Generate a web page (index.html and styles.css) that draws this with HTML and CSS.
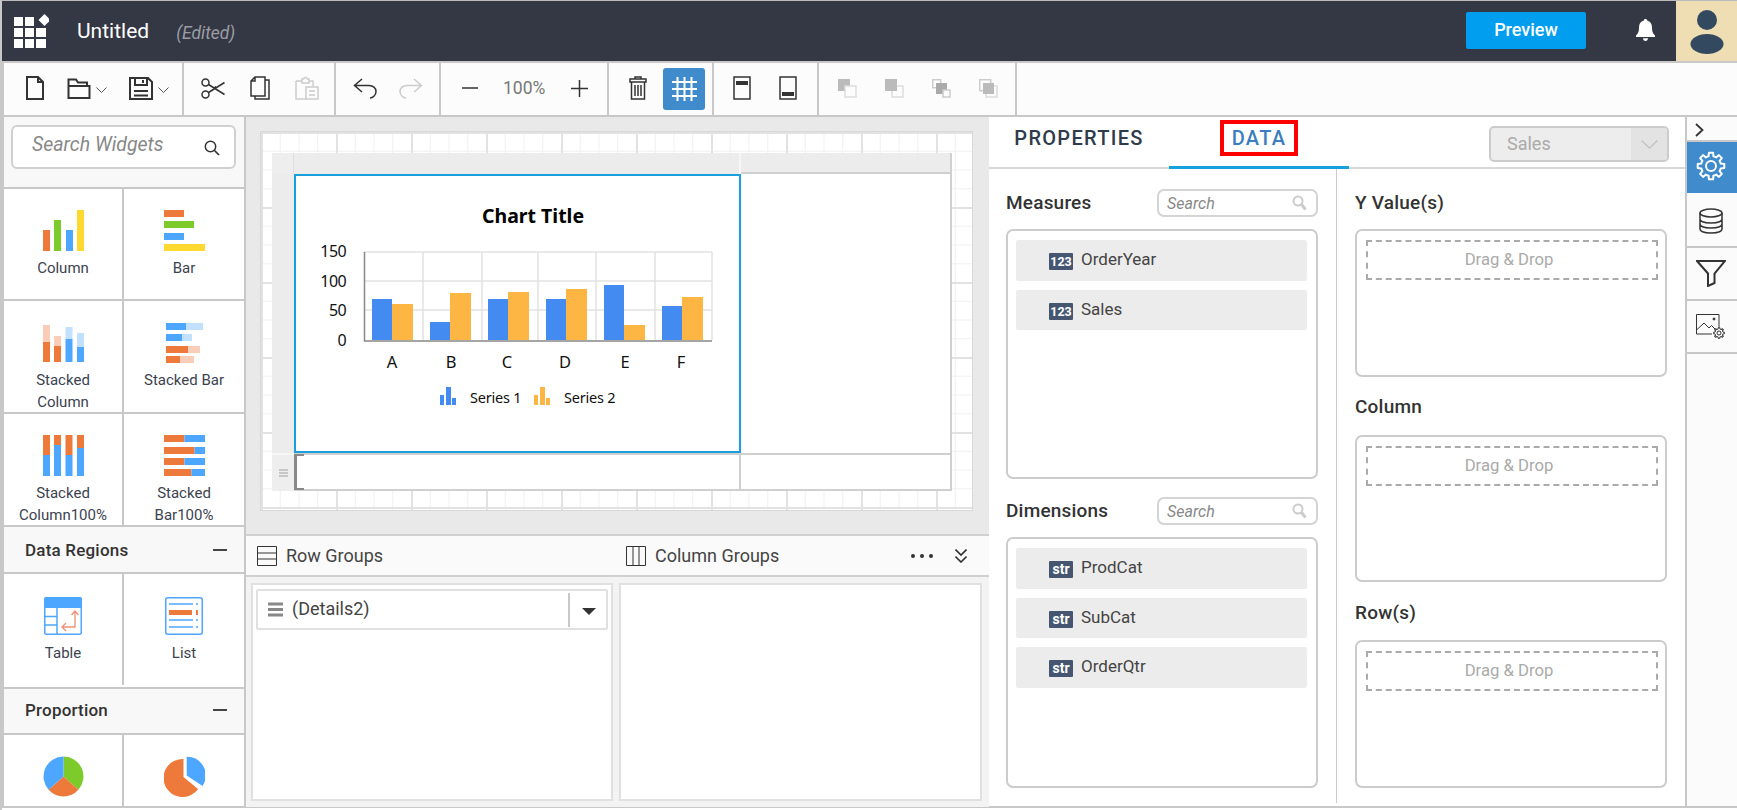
FILE: index.html
```html
<!doctype html>
<html lang="en">
<head>
    <meta charset="UTF-8">
    <title>Report Designer</title>
    <link rel="stylesheet" href="styles.css">
</head>
<body>
<div class="app">

    <!-- top bar -->
    <div class="topbar">
        <svg class="logo" width="35" height="34" viewBox="0 0 35 34">
            <g fill="#fff">
                <rect x="0" y="3" width="9" height="9"/><rect x="11" y="3" width="9" height="9"/>
                <rect x="0" y="14" width="9" height="9"/><rect x="11" y="14" width="9" height="9"/><rect x="22" y="14" width="10" height="9"/>
                <rect x="0" y="25" width="9" height="9"/><rect x="11" y="25" width="9" height="9"/><rect x="22" y="25" width="10" height="9"/>
                <polygon points="30.5,0 36.5,6 30.5,12 24.5,6"/>
            </g>
        </svg>
        <span class="doc-name">Untitled</span>
        <span class="doc-state">(Edited)</span>
        <button class="preview-btn">Preview</button>
        <svg class="bell" width="19" height="22" viewBox="0 0 19 22">
            <path fill="#fff" d="M9.5 0c1 0 1.6.7 1.6 1.6C14.5 2.4 16 5 16 8.5c0 4 .8 6 3 8V18H0v-1.5c2.2-2 3-4 3-8C3 5 4.5 2.4 7.9 1.6 7.9.7 8.5 0 9.5 0zM7 19.2h5c0 1.5-1.1 2.8-2.5 2.8S7 20.7 7 19.2z"/>
        </svg>
        <div class="avatar">
            <svg width="34" height="44" viewBox="0 0 34 44">
                <circle cx="17" cy="10" r="10" fill="#33495f"/>
                <ellipse cx="17" cy="34" rx="16.5" ry="10" fill="#33495f"/>
            </svg>
        </div>
    </div>

    <!-- toolbar -->
    <div class="toolbar">
        <div class="tb-group group-file">
            <svg width="20" height="24" viewBox="0 0 20 24" class="ic"><path d="M2 1H13L18 6V23H2ZM13 1V6H18"/></svg>
            <span class="tb-pair">
                <svg width="24" height="22" viewBox="0 0 24 22" class="ic"><path d="M1.5 21V2.5H9L11 5.5H20V9M1.5 21H22.5V9H1.5Z"/></svg>
                <svg width="11" height="7" viewBox="0 0 11 7" class="ic-thin"><path d="M.5 .5L5.5 5.5L10.5 .5"/></svg>
            </span>
            <span class="tb-pair">
                <svg width="24" height="23" viewBox="0 0 24 23" class="ic"><path d="M1 1H19L23 5V22H1ZM6 1V8H18V1M14 3V6M5 14H19M5 18.5H19"/></svg>
                <svg width="11" height="7" viewBox="0 0 11 7" class="ic-thin"><path d="M.5 .5L5.5 5.5L10.5 .5"/></svg>
            </span>
        </div>
        <div class="tb-group group-edit">
            <svg width="24" height="21" viewBox="0 0 24 21" class="ic ic-mid"><circle cx="4.5" cy="4.5" r="3.5"/><circle cx="4.5" cy="16.5" r="3.5"/><path d="M7.5 6.5L23.5 16.5M7.5 14.5L23.5 4.5M13 10L15 8.5"/></svg>
            <svg width="20" height="24" viewBox="0 0 20 24" class="ic ic-mid"><path d="M1 5L5 1H15V20H1ZM5 1V5H1M15 4H19V23H5V20"/></svg>
            <svg width="24" height="24" viewBox="0 0 24 24" class="ic ic-mid ic-off"><path d="M1 5H7V3H8.5C9 1 12 1 12.5 3H14V5H18V10M1 5V23H11M7 3V7H14V3M11 11H23V23H11ZM14 15H20M14 19H20"/></svg>
        </div>
        <div class="tb-group group-history">
            <svg width="24" height="21" viewBox="0 0 24 21" class="ic ic-mid"><path d="M9 1L1.5 7.5L9 14M1.5 7.5H16C20 7.5 23 10 23 13.5S20 20 17 20"/></svg>
            <svg width="24" height="21" viewBox="0 0 24 21" class="ic ic-mid ic-off"><path d="M15 1L22.5 7.5L15 14M22.5 7.5H8C4 7.5 1 10 1 13.5S4 20 7 20"/></svg>
        </div>
        <div class="tb-group group-zoom">
            <svg width="16" height="16" viewBox="0 0 16 16" class="ic ic-mid"><path d="M0 8H16"/></svg>
            <span class="zoom-val">100%</span>
            <svg width="17" height="17" viewBox="0 0 17 17" class="ic ic-mid"><path d="M0 8.5H17M8.5 0V17"/></svg>
        </div>
        <div class="tb-group group-design">
            <svg width="18" height="24" viewBox="0 0 18 24" class="ic ic-mid"><path d="M6 3V1H12V3M1 3H17V6H1ZM2.5 6V23H15.5V6M6 9V20M9 9V20M12 9V20"/></svg>
            <span class="grid-btn">
                <svg width="25" height="24" viewBox="0 0 25 24"><path fill="none" stroke="#fff" stroke-width="2" d="M5.5 0V24M12.5 0V24M19.5 0V24M0 5H25M0 12H25M0 19H25"/></svg>
            </span>
        </div>
        <div class="tb-group group-band">
            <svg width="18" height="24" viewBox="0 0 18 24" class="ic ic-mid"><rect x="1" y="1" width="16" height="22"/><rect x="3" y="5" width="12" height="4" class="solid"/></svg>
            <svg width="18" height="24" viewBox="0 0 18 24" class="ic ic-mid"><rect x="1" y="1" width="16" height="22"/><rect x="3" y="16" width="12" height="4" class="solid"/></svg>
        </div>
        <div class="tb-group group-order">
            <svg width="19" height="19" viewBox="0 0 19 19"><rect width="12" height="12" fill="#bbb"/><rect x="7" y="7" width="11" height="11" fill="#fcfcfc" stroke="#ddd" stroke-width="1.5"/></svg>
            <svg width="19" height="19" viewBox="0 0 19 19"><rect x="7" y="7" width="11" height="11" fill="#fcfcfc" stroke="#ddd" stroke-width="1.5"/><rect width="12" height="12" fill="#bbb"/></svg>
            <svg width="19" height="19" viewBox="0 0 19 19"><rect x=".7" y=".7" width="8" height="8" fill="#fcfcfc" stroke="#ccc" stroke-width="1.5"/><rect x="4" y="4" width="11" height="11" fill="#aaa"/><rect x="11" y="11" width="7" height="7" fill="#fcfcfc" stroke="#ccc" stroke-width="1.5"/></svg>
            <svg width="19" height="19" viewBox="0 0 19 19"><rect x=".7" y=".7" width="11" height="11" fill="#fcfcfc" stroke="#ccc" stroke-width="1.5"/><rect x="7" y="7" width="11" height="11" fill="#fcfcfc" stroke="#ddd" stroke-width="1.5"/><rect x="4" y="4" width="11" height="11" fill="#bbb"/></svg>
        </div>
    </div>

    <div class="main">

        <!-- widget list -->
        <div class="widgets">
            <div class="widget-search">
                <div class="search-big">
                    <span>Search Widgets</span>
                    <svg width="16" height="16" viewBox="0 0 16 16"><circle cx="6.5" cy="6.5" r="5.2" fill="none" stroke="#333" stroke-width="1.5"/><path d="M10.5 10.5L15 15" stroke="#333" stroke-width="1.7"/></svg>
                </div>
            </div>

            <div class="widget-row row-a">
                <div class="widget-cell">
                    <svg width="41" height="41" viewBox="0 0 41 41">
                        <rect x="0" y="20" width="7" height="21" fill="#ed7a3a"/><rect x="11" y="10" width="7" height="31" fill="#7dcb2b"/>
                        <rect x="23" y="20" width="7" height="21" fill="#4da6ff"/><rect x="34" y="0" width="7" height="41" fill="#ffd92f"/>
                    </svg>
                    <span>Column</span>
                </div>
                <div class="widget-cell">
                    <svg width="41" height="41" viewBox="0 0 41 41">
                        <rect x="0" y="0" width="20" height="7" fill="#ed7a3a"/><rect x="0" y="11" width="30" height="7" fill="#7dcb2b"/>
                        <rect x="0" y="23" width="20" height="7" fill="#4da6ff"/><rect x="0" y="34" width="41" height="7" fill="#ffd92f"/>
                    </svg>
                    <span>Bar</span>
                </div>
            </div>

            <div class="widget-row row-b">
                <div class="widget-cell">
                    <svg width="41" height="41" viewBox="0 0 41 41">
                        <rect x="0" y="3" width="7" height="17" fill="#f9cdb8"/><rect x="0" y="20" width="7" height="20" fill="#ed7a3a"/>
                        <rect x="11" y="14" width="7" height="10" fill="#f9cdb8"/><rect x="11" y="24" width="7" height="16" fill="#ed7a3a"/>
                        <rect x="22.5" y="5" width="7" height="12" fill="#c2e0ff"/><rect x="22.5" y="17" width="7" height="23" fill="#4da6ff"/>
                        <rect x="34" y="11" width="7" height="14" fill="#c2e0ff"/><rect x="34" y="25" width="7" height="15" fill="#4da6ff"/>
                    </svg>
                    <span>Stacked<br>Column</span>
                </div>
                <div class="widget-cell">
                    <svg width="41" height="41" viewBox="0 0 41 41">
                        <rect x="2" y="1" width="20" height="7" fill="#4da6ff"/><rect x="22" y="1" width="17" height="7" fill="#c2e0ff"/>
                        <rect x="2" y="12" width="16" height="7" fill="#4da6ff"/><rect x="18" y="12" width="10" height="7" fill="#c2e0ff"/>
                        <rect x="2" y="24" width="22" height="7" fill="#ed7a3a"/><rect x="24" y="24" width="12" height="7" fill="#f9cdb8"/>
                        <rect x="2" y="34" width="14" height="7" fill="#ed7a3a"/><rect x="16" y="34" width="14" height="7" fill="#f9cdb8"/>
                    </svg>
                    <span>Stacked Bar</span>
                </div>
            </div>

            <div class="widget-row row-b">
                <div class="widget-cell">
                    <svg width="41" height="41" viewBox="0 0 41 41">
                        <rect x="0" y="0" width="7" height="20" fill="#ed7a3a"/><rect x="0" y="20" width="7" height="21" fill="#4da6ff"/>
                        <rect x="11" y="0" width="7" height="10" fill="#ed7a3a"/><rect x="11" y="10" width="7" height="31" fill="#4da6ff"/>
                        <rect x="22.5" y="0" width="7" height="20" fill="#ed7a3a"/><rect x="22.5" y="20" width="7" height="21" fill="#4da6ff"/>
                        <rect x="34" y="0" width="7" height="13" fill="#ed7a3a"/><rect x="34" y="13" width="7" height="28" fill="#4da6ff"/>
                    </svg>
                    <span>Stacked<br>Column100%</span>
                </div>
                <div class="widget-cell">
                    <svg width="41" height="41" viewBox="0 0 41 41">
                        <rect x="0" y="0" width="20.5" height="7" fill="#ed7a3a"/><rect x="20.5" y="0" width="20.5" height="7" fill="#4da6ff"/>
                        <rect x="0" y="12" width="30.5" height="7" fill="#ed7a3a"/><rect x="30.5" y="12" width="10.5" height="7" fill="#4da6ff"/>
                        <rect x="0" y="23" width="20.5" height="7" fill="#ed7a3a"/><rect x="20.5" y="23" width="20.5" height="7" fill="#4da6ff"/>
                        <rect x="0" y="34" width="27.5" height="7" fill="#ed7a3a"/><rect x="27.5" y="34" width="13.5" height="7" fill="#4da6ff"/>
                    </svg>
                    <span>Stacked<br>Bar100%</span>
                </div>
            </div>

            <div class="widget-head head-a">
                <span>Data Regions</span><i></i>
            </div>
            <div class="widget-row row-c">
                <div class="widget-cell cell-small">
                    <svg width="38" height="38" viewBox="0 0 38 38">
                        <rect x=".75" y=".75" width="36.5" height="36.5" rx="2" fill="#fff" stroke="#4da6ff" stroke-width="1.5"/>
                        <rect x="0" y="0" width="38" height="11" rx="2" fill="#4da6ff"/>
                        <path d="M13 11V38M0 19.5H13M0 28H13" fill="none" stroke="#4da6ff" stroke-width="1.5"/>
                        <path d="M31 14V30H18M27.5 18L31 14L34.5 18M22 26L18 30L22 34" fill="none" stroke="#f0907a" stroke-width="1.3"/>
                    </svg>
                    <span>Table</span>
                </div>
                <div class="widget-cell cell-small">
                    <svg width="38" height="38" viewBox="0 0 38 38">
                        <rect x=".75" y=".75" width="36.5" height="36.5" rx="2" fill="#fff" stroke="#4da6ff" stroke-width="1.5"/>
                        <path d="M4 7H28M31 7H33M4 23H28M31 23H33M4 30H28M31 30H33" fill="none" stroke="#4da6ff" stroke-width="1.5"/>
                        <rect x="4" y="13" width="23" height="5" fill="#ed7a3a"/><rect x="31" y="13" width="2" height="5" fill="#ed7a3a"/>
                    </svg>
                    <span>List</span>
                </div>
            </div>

            <div class="widget-head head-b">
                <span>Proportion</span><i></i>
            </div>
            <div class="widget-row row-d">
                <div class="widget-cell">
                    <svg width="41" height="41" viewBox="0 0 41 41">
                        <path d="M20.5 20.5V.5A20 20 0 0 1 35.4 33.8Z" fill="#7dcb2b"/>
                        <path d="M20.5 20.5L35.4 33.8A20 20 0 0 1 5.6 33.8Z" fill="#ed7a3a"/>
                        <path d="M20.5 20.5L5.6 33.8A20 20 0 0 1 20.5 .5Z" fill="#4da6ff"/>
                    </svg>
                </div>
                <div class="widget-cell">
                    <svg width="41" height="41" viewBox="0 0 41 41">
                        <path d="M19.5 21V3A19 19 0 1 0 34 33Z" fill="#ed7a3a"/>
                        <path d="M22.7 19.5V.7A18.8 18.8 0 0 1 38.5 30Z" fill="#4da6ff"/>
                    </svg>
                </div>
            </div>
        </div>

        <!-- canvas and groups -->
        <div class="center">
            <div class="stage">
                <div class="canvas">
                    <div class="surface">
                        <div class="strip-corner"></div>
                        <div class="strip"></div>
                        <div class="strip strip-end"></div>

                        <div class="side"></div>
                        <div class="chart-cell">
                            <svg width="443" height="275" viewBox="296 176 443 275" class="chart">
                                <text x="533" y="223" class="chart-title">Chart Title</text>
                                <path d="M364 252H712M364 281H712M364 310H712M423 252V340M482 252V340M538 252V340M596 252V340M655 252V340M712 252V340" fill="none" stroke="#e2e2e2" stroke-width="1.5"/>
                                <g fill="#438bf0">
                                    <rect x="372" y="299" width="20" height="41"/><rect x="430" y="322" width="20" height="18"/>
                                    <rect x="488" y="299" width="20" height="41"/><rect x="546" y="299" width="20" height="41"/>
                                    <rect x="604" y="285" width="20" height="55"/><rect x="662" y="306" width="20" height="34"/>
                                </g>
                                <g fill="#fdb544">
                                    <rect x="392" y="304" width="21" height="36"/><rect x="450" y="293" width="21" height="47"/>
                                    <rect x="508" y="292" width="21" height="48"/><rect x="566" y="289" width="21" height="51"/>
                                    <rect x="624" y="325" width="21" height="15"/><rect x="682" y="297" width="21" height="43"/>
                                </g>
                                <path d="M364.5 252V341H712" fill="none" stroke="#888" stroke-width="1.5"/>
                                <g class="axis-y">
                                    <text x="346" y="257">150</text><text x="346" y="287">100</text>
                                    <text x="346" y="316">50</text><text x="346" y="346">0</text>
                                </g>
                                <g class="axis-x">
                                    <text x="392" y="368">A</text><text x="451" y="368">B</text><text x="507" y="368">C</text>
                                    <text x="565" y="368">D</text><text x="625" y="368">E</text><text x="681" y="368">F</text>
                                </g>
                                <g fill="#438bf0"><rect x="440" y="395" width="4" height="10"/><rect x="446" y="387" width="5" height="18"/><rect x="452" y="398" width="4" height="7"/></g>
                                <g fill="#fdb544"><rect x="534" y="395" width="4" height="10"/><rect x="540" y="387" width="5" height="18"/><rect x="546" y="398" width="4" height="7"/></g>
                                <text x="470" y="403" class="legend">Series 1</text>
                                <text x="564" y="403" class="legend">Series 2</text>
                            </svg>
                        </div>
                        <div class="blank-cell"></div>

                        <div class="side side-low">
                            <svg width="9" height="8" viewBox="0 0 9 8"><path d="M0 1H9M0 4H9M0 7H9" stroke="#bbb" stroke-width="1.5"/></svg>
                        </div>
                        <div class="band-cell"><b class="corner"></b></div>
                        <div class="band-cell band-end"></div>
                    </div>
                </div>
            </div>

            <div class="groups-head">
                <div class="group-tab">
                    <svg width="20" height="20" viewBox="0 0 20 20" class="ic-line"><path d="M.5 .5H19.5V19.5H.5ZM.5 7H19.5M.5 13H19.5"/></svg>
                    <span>Row Groups</span>
                </div>
                <div class="group-tab">
                    <svg width="20" height="20" viewBox="0 0 20 20" class="ic-line"><path d="M.5 .5H19.5V19.5H.5ZM7 .5V19.5M13 .5V19.5"/></svg>
                    <span>Column Groups</span>
                </div>
                <svg class="more" width="22" height="4" viewBox="0 0 22 4"><circle cx="2" cy="2" r="2"/><circle cx="11" cy="2" r="2"/><circle cx="20" cy="2" r="2"/></svg>
                <svg class="fold" width="12" height="14" viewBox="0 0 12 14"><path d="M.5 .5L6 6L11.5 .5M.5 7.5L6 13L11.5 7.5" fill="none" stroke="#333" stroke-width="1.6"/></svg>
            </div>

            <div class="groups-body">
                <div class="group-box box-row">
                    <div class="detail-row">
                        <svg width="15" height="15" viewBox="0 0 15 15"><path d="M0 2H15M0 7.5H15M0 13H15" stroke="#888" stroke-width="3"/></svg>
                        <span>(Details2)</span>
                        <em></em>
                        <svg width="14" height="7" viewBox="0 0 14 7"><path d="M0 0H14L7 7Z" fill="#333"/></svg>
                    </div>
                </div>
                <div class="group-box box-col"></div>
            </div>
        </div>

        <!-- properties / data -->
        <div class="panel">
            <div class="tabs">
                <div class="tab">PROPERTIES</div>
                <div class="tab tab-on"><span>DATA</span></div>
                <div class="source">
                    <span>Sales</span>
                    <i><svg width="17" height="9" viewBox="0 0 17 9"><path d="M.5 .5L8.5 8L16.5 .5" fill="none" stroke="#c4c4c4" stroke-width="1.5"/></svg></i>
                </div>
            </div>
            <div class="panel-body">
                <div class="fields">
                    <div class="field-head">
                        <h4>Measures</h4>
                        <div class="search-small">
                            <span>Search</span>
                            <svg width="15" height="16" viewBox="0 0 15 16"><circle cx="6" cy="6" r="4.5" fill="none" stroke="#ccc" stroke-width="2"/><path d="M9.5 9.5L13.5 14.5" stroke="#ccc" stroke-width="3"/></svg>
                        </div>
                    </div>
                    <div class="field-box box-measures">
                        <div class="field"><b class="badge-num">123</b>OrderYear</div>
                        <div class="field"><b class="badge-num">123</b>Sales</div>
                    </div>
                    <div class="field-head head-second">
                        <h4>Dimensions</h4>
                        <div class="search-small">
                            <span>Search</span>
                            <svg width="15" height="16" viewBox="0 0 15 16"><circle cx="6" cy="6" r="4.5" fill="none" stroke="#ccc" stroke-width="2"/><path d="M9.5 9.5L13.5 14.5" stroke="#ccc" stroke-width="3"/></svg>
                        </div>
                    </div>
                    <div class="field-box box-dims">
                        <div class="field"><b>str</b>ProdCat</div>
                        <div class="field"><b>str</b>SubCat</div>
                        <div class="field"><b>str</b>OrderQtr</div>
                    </div>
                </div>
                <div class="slots">
                    <h4 class="slot-first">Y Value(s)</h4>
                    <div class="slot"><div class="drop">Drag &amp; Drop</div></div>
                    <h4 class="slot-label">Column</h4>
                    <div class="slot slot-mid"><div class="drop">Drag &amp; Drop</div></div>
                    <h4 class="slot-label slot-low">Row(s)</h4>
                    <div class="slot"><div class="drop">Drag &amp; Drop</div></div>
                </div>
            </div>
        </div>

        <!-- side rail -->
        <div class="rail">
            <div class="rail-toggle">
                <svg width="9" height="14" viewBox="0 0 9 14"><path d="M1 1L7.5 7L1 13" fill="none" stroke="#333" stroke-width="1.8"/></svg>
            </div>
            <div class="rail-item rail-on">
                <svg width="30" height="30" viewBox="-15 -15 30 30" class="gear">
                    <g id="gear-teeth">
                        <path id="tooth" d="M-3.83-9.24L-2.42-9.7L-2.11-13.3H2.11L2.42-9.7L3.83-9.24"/>
                        <use href="#tooth" transform="rotate(45)"/><use href="#tooth" transform="rotate(90)"/><use href="#tooth" transform="rotate(135)"/>
                        <use href="#tooth" transform="rotate(180)"/><use href="#tooth" transform="rotate(225)"/><use href="#tooth" transform="rotate(270)"/><use href="#tooth" transform="rotate(315)"/>
                    </g>
                    <circle r="5"/>
                </svg>
            </div>
            <div class="rail-item">
                <svg width="24" height="26" viewBox="0 0 24 26" class="ic ic-mid"><ellipse cx="12" cy="5" rx="11" ry="4"/><path d="M1 5V21C1 23.5 6 25 12 25S23 23.5 23 21V5M1 11C1 13.5 6 15 12 15S23 13.5 23 11M1 16C1 18.5 6 20 12 20S23 18.5 23 16"/></svg>
            </div>
            <div class="rail-item">
                <svg width="30" height="27" viewBox="0 0 30 27" class="ic"><path d="M1 1H29L18.5 13.5V23L12 26V13.5Z"/></svg>
            </div>
            <div class="rail-item">
                <svg width="29" height="25" viewBox="0 0 29 25" class="ic-line">
                    <path d="M.5 .5H23V13M16 20H.5V.5M.5 16L8 9L13 14M13 14L15.5 11.5L19 15"/>
                    <circle cx="18" cy="5" r="1" fill="#333"/>
                    <g transform="translate(23 19) scale(.4)" class="gear-small">
                        <use href="#gear-teeth"/>
                        <circle r="5"/>
                    </g>
                </svg>
            </div>
        </div>
    </div>
</div>
</body>
</html>
```

FILE: styles.css
```css
*{
    margin: 0;
    padding: 0;
    box-sizing: border-box;
}
html,body{
    width: 100%;
    height: 100%;
    overflow: hidden;
    background: #fff;
}
body{
    font-family: Roboto, "Liberation Sans", sans-serif;
    color: #333;
}
.app{
    width: 1737px;
    height: 810px;
    border-top: 1px solid #bbb;
    border-left: 2px solid #c8c8c8;
    overflow: hidden;
}

/* top bar */
.topbar{
    height: 60px;
    background: #343844;
    display: flex;
    align-items: center;
    color: #fff;
}
.logo{
    margin-left: 12px;
}
.doc-name{
    margin-left: 28px;
    font-size: 21px;
}
.doc-state{
    margin-left: 27px;
    margin-top: 3px;
    font-size: 17.5px;
    font-style: italic;
    color: #9a9da5;
}
.preview-btn{
    margin-left: auto;
    margin-bottom: 1px;
    width: 120px;
    height: 37px;
    border: none;
    border-radius: 2px;
    background: #019eef;
    color: #fff;
    font: 500 18px Roboto, sans-serif;
    padding-bottom: 3px;
}
.bell{
    margin-left: 50px;
    margin-top: -2px;
}
.avatar{
    margin-left: 21px;
    width: 61px;
    height: 60px;
    background: #efddb3;
    display: flex;
    align-items: center;
    justify-content: center;
    padding-top: 2px;
}

/* toolbar */
.toolbar{
    height: 56px;
    border-top: 2px solid #c8c8c8;
    border-bottom: 2px solid #c8c8c8;
    border-left: 2px solid #c8c8c8;
    background: #fcfcfc;
    display: flex;
}
.tb-group{
    display: flex;
    align-items: center;
    padding-bottom: 2px;
    border-right: 2px solid #c8c8c8;
}
.tb-pair{
    display: flex;
    align-items: center;
    gap: 5px;
}
.tb-pair .ic-thin{
    margin-top: 4px;
}
.group-file{width: 180px;padding-left: 21px;gap: 22px;}
.group-edit{width: 152px;padding-left: 17px;gap: 25px;}
.group-history{width: 105px;padding-left: 17px;gap: 22px;}
.group-zoom{width: 168px;padding-left: 21px;gap: 25px;}
.group-design{width: 105px;padding-left: 20px;gap: 16px;}
.group-band{width: 105px;padding-left: 19px;gap: 28px;}
.group-order{width: 198px;padding-left: 19px;gap: 28px;}
.ic{
    fill: none;
    stroke: #333;
    stroke-width: 2;
}
.ic-mid{
    stroke-width: 1.5;
}
.ic-off{
    stroke: #ccc;
}
.ic .solid{
    fill: #333;
    stroke: none;
}
.ic-thin{
    fill: none;
    stroke: #555;
    stroke-width: 1;
}
.ic-line{
    fill: none;
    stroke: #333;
    stroke-width: 1;
}
.zoom-val{
    width: 43px;
    font-size: 17.5px;
    color: #777;
    white-space: nowrap;
}
.grid-btn{
    width: 42px;
    height: 42px;
    margin-top: 2px;
    border-radius: 3px;
    background: #3f8bcb;
    display: flex;
    align-items: center;
    justify-content: center;
}

/* main row */
.main{
    display: flex;
    height: 691px;
    border-left: 2px solid #c8c8c8;
    border-bottom: 2px solid #c8c8c8;
}

/* widget list */
.widgets{
    width: 242px;
    border-right: 2px solid #c8c8c8;
    background: #fff;
    overflow: hidden;
}
.widget-search{
    height: 72px;
    padding: 8px 8px 0 7px;
    background: #f8f8f8;
    border-bottom: 2px solid #c8c8c8;
}
.search-big{
    height: 44px;
    border: 2px solid #d0d0d0;
    border-radius: 6px;
    background: #fff;
    display: flex;
    align-items: center;
    justify-content: space-between;
    padding: 0 14px 0 19px;
    font-size: 19.5px;
    font-style: italic;
    color: #888;
}
.search-big span{
    margin-top: -5px;
}
.search-big svg{
    margin-top: 2px;
}
.widget-row{
    display: flex;
    border-bottom: 2px solid #c8c8c8;
}
.row-a{height: 112px;}
.row-b{height: 113px;}
.row-c{height: 115px;padding-bottom: 2px;}
.row-d{height: 74px;border-bottom: none;}
.widget-cell{
    width: 120px;
    padding-top: 21px;
    display: flex;
    flex-direction: column;
    align-items: center;
    font-size: 15px;
    line-height: 22px;
    text-align: center;
    color: #3c4350;
}
.widget-cell:first-child{
    border-right: 2px solid #c8c8c8;
}
.widget-cell svg{
    margin-bottom: 6px;
    flex: none;
}
.cell-small{
    padding-top: 23px;
}
.cell-small svg{
    margin-bottom: 7px;
}
.widget-head{
    display: flex;
    align-items: center;
    justify-content: space-between;
    padding: 0 17px 0 21px;
    background: #f8f8f8;
    border-bottom: 2px solid #c8c8c8;
    font-size: 17px;
    font-weight: 500;
    letter-spacing: .2px;
}
.head-a{height: 47px;}
.head-b{height: 46px;padding-bottom: 2px;}
.widget-head i{
    width: 14px;
    height: 2px;
    background: #444;
}

/* center */
.center{
    width: 743px;
    background: #e9e9e9;
}
.stage{
    height: 419px;
    padding: 14px 0 0 14px;
    border-bottom: 2px solid #d0d0d0;
}
.canvas{
    width: 713px;
    height: 380px;
    padding: 21px 0 0 11px;
    border: 1px solid #d8d8d8;
    background-color: #fff;
    background-image:
        linear-gradient(90deg,#e2e2e2 2px,transparent 2px),
        linear-gradient(#e2e2e2 2px,transparent 2px),
        linear-gradient(90deg,#f0f0f0 1px,transparent 1px),
        linear-gradient(#f0f0f0 1px,transparent 1px);
    background-size: 75px 75px,75px 75px,18.75px 18.75px,18.75px 18.75px;
}
.surface{
    width: 680px;
    height: 338px;
    display: grid;
    grid-template-columns: 22px 447px 211px;
    grid-template-rows: 21px 279px 38px;
}
.strip-corner{
    background: #eee;
    border-right: 1px solid #ddd;
}
.strip{
    background: #ececec;
    border-right: 2px solid #f6f6f6;
}
.strip-end{
    border-right: 2px solid #d0d0d0;
    border-bottom: 2px solid #d0d0d0;
}
.side{
    background: #ececec;
}
.side-low{
    background: #eee;
    border-top: 2px solid #f6f6f6;
    display: flex;
    align-items: center;
    justify-content: center;
}
.chart-cell{
    border: 2px solid #1a9fdd;
    background: #fff;
}
.chart{
    display: block;
}
.chart text{
    font-family: "Noto Sans", "Open Sans", sans-serif;
    fill: #111;
}
.chart .chart-title{
    font-size: 19.5px;
    font-weight: 700;
    text-anchor: middle;
    fill: #000;
}
.axis-y text{
    font-size: 16px;
    letter-spacing: -.6px;
    text-anchor: end;
}
.axis-x text{
    font-size: 16.5px;
    text-anchor: middle;
}
.chart .legend{
    font-size: 14.5px;
    letter-spacing: -.2px;
}
.blank-cell{
    background: #fff;
    border-right: 2px solid #d0d0d0;
}
.band-cell{
    position: relative;
    background: #fff;
    border-top: 2px solid #d0d0d0;
    border-bottom: 2px solid #d0d0d0;
    border-right: 2px solid #d0d0d0;
}
.corner{
    position: absolute;
    left: 0;
    top: -1px;
    bottom: -1px;
    width: 10px;
    border: 2px solid #888;
    border-width: 2px 0 2px 3px;
}

.groups-head{
    height: 41px;
    background: #fafafa;
    border-bottom: 2px solid #d0d0d0;
    display: flex;
    align-items: center;
    padding-left: 11px;
    font-size: 18px;
    color: #444;
}
.group-tab{
    width: 369px;
    display: flex;
    align-items: center;
    gap: 9px;
}
.more{
    margin-left: -84px;
    fill: #333;
}
.fold{
    margin-left: 22px;
}
.groups-body{
    height: 230px;
    background: #f3f3f3;
    padding: 6px 6px 0 5px;
    display: flex;
    gap: 6px;
    align-items: flex-start;
}
.group-box{
    height: 218px;
    background: #fff;
    border: 2px solid #e0e0e0;
}
.box-row{
    width: 362px;
    padding: 4px 3px;
}
.box-col{
    width: 363px;
}
.detail-row{
    height: 41px;
    border: 2px solid #e0e0e0;
    border-radius: 2px;
    display: flex;
    align-items: center;
    padding-left: 10px;
    font-size: 18px;
    color: #444;
}
.detail-row span{
    margin-left: 9px;
    width: 276px;
    margin-top: -2px;
}
.detail-row em{
    width: 2px;
    height: 34px;
    background: #c8c8c8;
}
.detail-row svg:last-child{
    margin-left: 12px;
    margin-top: 3px;
}

/* properties panel */
.panel{
    width: 696px;
    background: #fff;
}
.tabs{
    height: 52px;
    border-bottom: 2px solid #d8d8d8;
    display: flex;
    align-items: flex-start;
}
.tab{
    width: 180px;
    height: 52px;
    padding-bottom: 10px;
    display: flex;
    align-items: center;
    justify-content: center;
    font-size: 20px;
    font-weight: 500;
    letter-spacing: 1.3px;
    color: #2f3b4a;
}
.tab-on{
    border-bottom: 3px solid #1a9fdd;
    color: #3a7ebf;
    padding-bottom: 7px;
}
.tab-on span{
    width: 78px;
    height: 36px;
    border: 4px solid #f00;
    display: flex;
    align-items: center;
    justify-content: center;
}
.source{
    margin: 9px 0 0 140px;
    width: 180px;
    height: 36px;
    border: 2px solid #ccc;
    border-radius: 5px;
    background: #ededed;
    display: flex;
    align-items: center;
    justify-content: space-between;
    padding-left: 16px;
    font-size: 18px;
    color: #aaa;
    overflow: hidden;
}
.source span{
    margin-top: -2px;
}
.source i{
    width: 36px;
    height: 100%;
    background: #e3e3e3;
    display: flex;
    align-items: center;
    justify-content: center;
}
.panel-body{
    display: flex;
}
.fields{
    width: 348px;
    height: 634px;
    padding: 20px 0 0 17px;
    border-right: 1px solid #ccc;
}
.field-head{
    width: 312px;
    height: 28px;
    display: flex;
    align-items: center;
    justify-content: space-between;
}
.field-head h4{
    margin-top: -2px;
}
.head-second{
    margin-top: 18px;
}
h4{
    font-size: 19px;
    font-weight: 500;
    color: #333;
    letter-spacing: .2px;
}
.search-small{
    width: 161px;
    height: 28px;
    border: 2px solid #d4d4d4;
    border-radius: 7px;
    display: flex;
    align-items: center;
    justify-content: space-between;
    padding: 0 9px 0 8px;
    font-size: 16px;
    font-style: italic;
    color: #888;
}
.field-box{
    width: 312px;
    margin-top: 12px;
    border: 2px solid #ccc;
    border-radius: 7px;
    padding: 9px 9px 0 8px;
}
.box-measures{height: 250px;}
.box-dims{height: 251px;}
.field{
    height: 40.5px;
    margin-bottom: 9px;
    border-radius: 2px;
    background: #ececec;
    display: flex;
    align-items: center;
    padding: 0 0 2px 33px;
    font-size: 17px;
    color: #444;
}
.field b{
    width: 24px;
    height: 17px;
    margin-right: 8px;
    margin-top: 5px;
    border-radius: 1px;
    background: #465670;
    color: #fff;
    font-size: 14px;
    line-height: 17px;
    text-align: center;
}
.field .badge-num{
    font-size: 12.5px;
}
.slots{
    padding: 20px 0 0 18px;
    width: 330px;
}
.slot-label{
    height: 58px;
    line-height: 60px;
}
.slot-low{
    line-height: 62px;
}
.slots .slot-first{
    height: 28px;
    line-height: 28px;
    margin-bottom: 12px;
}
.slot{
    width: 312px;
    height: 148px;
    border: 2px solid #ccc;
    border-radius: 7px;
    padding: 9px 7px 0 9px;
}
.slot-mid{
    height: 147px;
}
.drop{
    height: 40px;
    border: 2px dashed #aaa;
    display: flex;
    align-items: center;
    justify-content: center;
    padding: 0 6px 2px 0;
    font-size: 16.7px;
    color: #aaa;
}

/* rail */
.rail{
    flex: 1;
    border-left: 2px solid #c8c8c8;
    background: #fbfbfb;
}
.rail-toggle{
    height: 25px;
    border-bottom: 2px solid #c8c8c8;
    padding: 5px 0 0 8px;
}
.rail-item{
    height: 53px;
    padding-right: 3px;
    border-bottom: 2px solid #c8c8c8;
    display: flex;
    align-items: center;
    justify-content: center;
}
.rail-on{
    height: 53px;
    padding-bottom: 3px;
    background: #3f8bcb;
    border-bottom: 2px solid #fbfbfb;
}
.gear{
    fill: none;
    stroke: #fff;
    stroke-width: 2;
    stroke-linejoin: round;
}
.gear-small{
    stroke-width: 2.5;
}
```
